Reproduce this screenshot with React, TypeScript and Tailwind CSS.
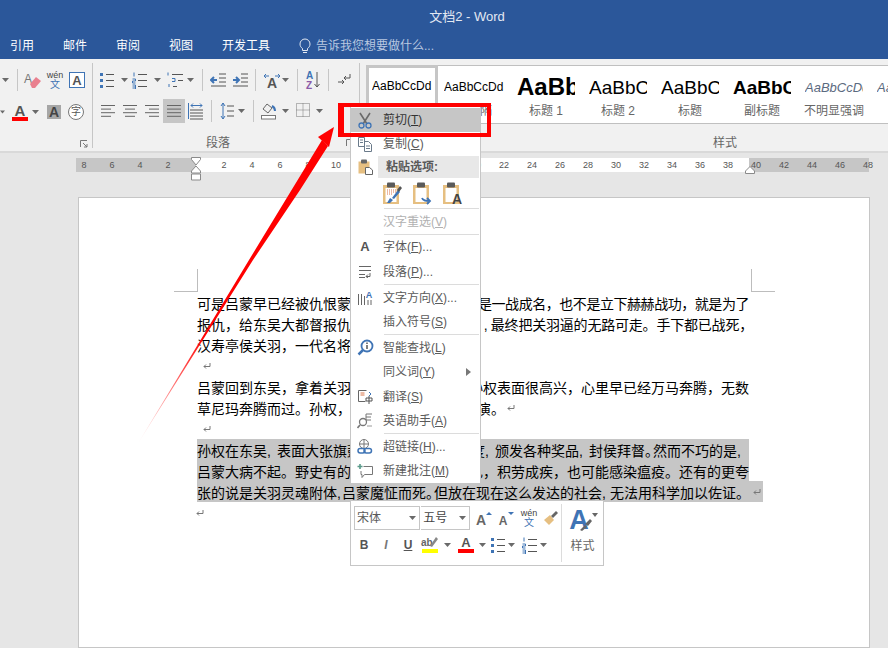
import React from 'react';

const cjk = { fontFamily: '"Liberation Sans", "Noto Sans CJK SC", sans-serif' };

function Caret({ className = '' }: { className?: string }) {
  return (
    <span className={`flex justify-center shrink-0 ${className}`}>
      <svg width="7" height="4" viewBox="0 0 7 4"><path d="M0 0h7L3.500 4z" fill="#6a6a6a" /></svg>
    </span>
  );
}

function Sep({ className = '' }: { className?: string }) {
  return <span className={`w-px h-[22px] bg-[#c6c6c6] shrink-0 ${className}`} />;
}

function Ico({ children, className = '', w = 18, h = 18 }: { children: React.ReactNode; className?: string; w?: number; h?: number }) {
  return (
    <span className={`flex justify-center shrink-0 ${className}`}>
      <svg width={w} height={h} viewBox={`0 0 ${w} ${h}`} fill="none">{children}</svg>
    </span>
  );
}

const bulletsIcon = (
  <>
    <rect x="2" y="2" width="3" height="3" fill="#3f74b5" /><rect x="2" y="8" width="3" height="3" fill="#3f74b5" /><rect x="2" y="14" width="3" height="3" fill="#3f74b5" />
    <path d="M8 3.500h8M8 9.500h8M8 15.500h8" stroke="#555" />
  </>
);
const numbersIcon = (
  <>
    <path d="M3 1.500v4M1.500 8h3v2h-3v2h3M1.500 14h3v4M1.500 16h3M1.500 18h3" stroke="#3f74b5" />
    <path d="M7 3.500h9M7 9.500h9M7 15.500h9" stroke="#555" />
  </>
);
const wenIcon = (
  <>
    <text x="9" y="8" textAnchor="middle" fontSize="9" fill="#444" style={cjk}>wén</text>
    <text x="9" y="18" textAnchor="middle" fontSize="10" fill="#3f74b5" style={cjk}>文</text>
  </>
);

function Aligned({ lines }: { lines: number[][] }) {
  return (
    <Ico w={16} h={14}>
      {lines.map((l, i) => <path key={i} d={`M${l[0]} ${1.500 + i * 3.600}H${l[1]}`} stroke="#666" />)}
    </Ico>
  );
}

function Ribbon() {
  return (
    <div className="h-[94px] bg-[#f1f1f1] border-b-2 border-[#d9d9d9] flex overflow-hidden shrink-0">
      <div className="w-[92px] shrink-0 flex flex-col">
        <div className="h-[32px] mt-[5px] flex items-center">
          <Caret className="w-[10px]" />
          <Sep className="ml-[7px]" />
          <Ico className="ml-[5px]" w={20}>
            <text x="1" y="12" fontSize="12" fill="#777" style={cjk}>A</text>
            <path d="M7 13l6-7 5 4-6 7H9z" fill="#e9808f" />
          </Ico>
          <Ico className="ml-[3px]" w={18} h={20}>{wenIcon}</Ico>
          <span className="ml-[5px] w-[16px] h-[16px] border border-[#3f74b5] bg-white flex items-center justify-center text-[13px] font-bold text-[#555] leading-none shrink-0" style={cjk}>A</span>
        </div>
        <div className="h-[24px] mt-[4px] flex items-center">
          <Caret className="w-[5px]" />
          <span className="ml-[7px] w-[16px] flex flex-col items-center shrink-0">
            <span className="text-[15px] font-bold text-[#555] leading-[13px]" style={cjk}>A</span>
            <span className="w-[16px] h-[4px] bg-[#f00]" />
          </span>
          <Caret className="w-[7px] ml-[4px]" />
          <span className="ml-[8px] w-[14px] h-[14px] bg-[#a6a6a6] flex items-center justify-center text-[14px] font-bold text-[#444] leading-none shrink-0" style={cjk}>A</span>
          <span className="ml-[7px] w-[16px] h-[16px] rounded-full border border-[#777] bg-white flex items-center justify-center text-[10px] text-[#555] leading-none shrink-0" style={cjk}>字</span>
        </div>
        <div className="flex-1 flex justify-end items-start pr-[4px] pt-[16px]">
          <svg width="8" height="8" viewBox="0 0 8 8" fill="none"><path d="M.5 7V.5H7M3 3l4 4M4 7h3V4" stroke="#777" /></svg>
        </div>
      </div>
      <Sep className="h-[85px] mt-[4px]" />

      <div className="w-[266px] shrink-0 flex flex-col">
        <div className="h-[32px] mt-[5px] flex items-center pl-[5px]">
          <Ico>{bulletsIcon}</Ico>
          <Caret className="w-[16px]" />
          <Ico className="-ml-[1px]">{numbersIcon}</Ico>
          <Caret className="w-[16px]" />
          <Ico className="ml-[1px]" w={18}>
            <path d="M2 1.500v3M6 7.500h3v3H6M3 13v3" stroke="#3f74b5" />
            <path d="M6 3.500h11M12 9.500h5M7 15.500h4" stroke="#555" />
          </Ico>
          <Caret className="w-[12px]" />
          <Sep className="ml-[6px]" />
          <Ico className="ml-[7px]" w={17}>
            <path d="M1 9h6M4 6L1 9l3 3" stroke="#3f74b5" strokeWidth="2" />
            <path d="M9 3h7M9 7h7M9 11h7M1 15h15" stroke="#555" />
          </Ico>
          <Ico className="ml-[5px]" w={17}>
            <path d="M1 9h6M4 6l3 3-3 3" stroke="#3f74b5" strokeWidth="2" />
            <path d="M9 3h7M9 7h7M9 11h7M1 15h15" stroke="#555" />
          </Ico>
          <Sep className="ml-[6px]" />
          <Ico className="ml-[7px]" w={18}>
            <path d="M1 5h5M1 5l2-2M1 5l2 2M17 5h-5M17 5l-2-2M17 5l-2 2" stroke="#3f74b5" />
            <text x="9" y="17" textAnchor="middle" fontSize="14" fontWeight="700" fill="#555" style={cjk}>A</text>
          </Ico>
          <Caret className="w-[9px]" />
          <Sep className="ml-[7px]" />
          <Ico className="ml-[7px]" w={16} h={20}>
            <text x="1" y="9" fontSize="10" fontWeight="700" fill="#3f74b5" style={cjk}>A</text>
            <text x="1" y="19" fontSize="10" fontWeight="700" fill="#8a5aa8" style={cjk}>Z</text>
            <path d="M12 2v15M9.500 14l2.500 3 2.500-3" stroke="#555" />
          </Ico>
          <Sep className="ml-[7px]" />
          <Ico className="ml-[7px]" w={16}>
            <path d="M14 3v4H8M10 5L8 7l2 2M2 11h6M6 9l2 2-2 2" stroke="#555" />
          </Ico>
        </div>
        <div className="h-[24px] mt-[4px] flex items-center pl-[4px]">
          <span className="w-[22px] shrink-0"><Aligned lines={[[1, 15], [1, 11], [1, 15], [1, 11]]} /></span>
          <span className="w-[22px] shrink-0"><Aligned lines={[[1, 15], [3, 13], [1, 15], [3, 13]]} /></span>
          <span className="w-[22px] shrink-0"><Aligned lines={[[1, 15], [5, 15], [1, 15], [5, 15]]} /></span>
          <span className="w-[22px] h-[24px] shrink-0 bg-[#c6c6c6] flex items-center justify-center"><Aligned lines={[[1, 15], [1, 15], [1, 15], [1, 15]]} /></span>
          <Ico className="ml-[3px]" w={16}>
            <path d="M.5 1v16" stroke="#3f74b5" /><path d="M3 3.500h11M5 1.500l-2 2 2 2M12 1.500l2 2-2 2" stroke="#3f74b5" />
            <path d="M2 8h13M2 11h13M2 14h13M2 17h13" stroke="#555" />
          </Ico>
          <Sep className="ml-[7px]" />
          <Ico className="ml-[7px]" w={16}>
            <path d="M4 1v16M2 4l2-3 2 3M2 14l2 3 2-3" stroke="#3f74b5" />
            <path d="M8 4h7M8 9h7M8 14h7" stroke="#555" />
          </Ico>
          <Caret className="w-[12px]" />
          <Sep className="ml-[6px]" />
          <Ico className="ml-[6px]" w={18}>
            <path d="M3 7l4-5 5 4-4 5z" stroke="#666" /><path d="M12 4c2 1 3 3 3 5" stroke="#3f74b5" strokeWidth="2" />
            <rect x="1.500" y="13.500" width="14" height="3.500" stroke="#777" fill="#fff" />
          </Ico>
          <Caret className="w-[14px]" />
          <Ico className="ml-[3px]" w={16}>
            <path d="M1.500 1.500h13v13h-13zM1.500 8h13M8 1.500v13" stroke="#777" strokeDasharray="1 1" />
          </Ico>
          <Caret className="w-[16px]" />
        </div>
        <div className="flex-1 flex items-start justify-between pl-[113px] pr-[5px] pt-[12px] text-[12px] text-[#666] leading-[16px]" style={cjk}>
          <span>段落</span>
          <svg width="8" height="8" viewBox="0 0 8 8" fill="none" className="mt-[4px]"><path d="M.5 7V.5H7" stroke="#777" /></svg>
        </div>
      </div>
      <Sep className="h-[85px] mt-[4px]" />

      <div className="flex-1 flex flex-col pl-[6px] min-w-0">
        <div className="h-[60px] mt-[6px] bg-white border-y border-[#c0c0c0] flex">
          <Style sample="AaBbCcDd" label="正文" sampleClass="w-[60px] text-[12px] text-black" selected />
          <Style sample="AaBbCcDd" label="无间隔" sampleClass="w-[60px] text-[12px] text-black" />
          <Style sample="AaBbCc" label="标题 1" sampleClass="w-[58px] text-[24px] font-bold text-black" />
          <Style sample="AaBbCc" label="标题 2" sampleClass="w-[58px] text-[19px] text-black" />
          <Style sample="AaBbCc" label="标题" sampleClass="w-[58px] text-[19px] text-black" />
          <Style sample="AaBbCc" label="副标题" sampleClass="w-[58px] text-[19px] font-bold text-black" />
          <Style sample="AaBbCcDd" label="不明显强调" sampleClass="w-[58px] text-[13px] italic text-[#5a6a80]" />
          <Style sample="AaB" label="" sampleClass="w-[58px] text-[13px] italic text-[#5a6a80]" />
        </div>
        <div className="pl-[347px] mt-[11px] leading-[16px] text-[12px] text-[#666]" style={cjk}>样式</div>
      </div>
    </div>
  );
}

function Style({ sample, label, sampleClass, selected }: { sample: string; label: string; sampleClass: string; selected?: boolean }) {
  return (
    <div className={`w-[72px] shrink-0 flex flex-col items-center border-[3px] ${selected ? 'border-[#c6c6c6] -mt-px -mb-px' : 'border-transparent'}`}>
      <div className={`h-[36px] flex items-center justify-start overflow-hidden whitespace-nowrap leading-none ${sampleClass}`} style={cjk}>{sample}</div>
      <div className="text-[12px] leading-[14px] -mt-[1px] text-[#666] whitespace-nowrap" style={cjk}>{label}</div>
    </div>
  );
}

function Ruler() {
  const left = ['8', '6', '4', '2'];
  const mid = ['2', '4', '6', '8', '10', '12', '14', '16', '18', '20', '22', '24', '26', '28', '30', '32', '34', '36', '38'];
  const right = ['40', '42', '44', '46', '48'];
  const cls = 'w-[28px] shrink-0 text-center';
  return (
    <div className="h-[14px] mt-[5px] ml-[76px] w-[793px] flex text-[9px] leading-[14px] text-[#555] relative shrink-0" style={cjk}>
      <div className="w-[120px] bg-[#c6c6c6] flex">
        <div className="flex -ml-[6px]">{left.map(n => <span key={n} className={cls}>{n}</span>)}</div>
      </div>
      <div className="w-[553px] bg-white flex pl-[14px]">
        {mid.map(n => <span key={n} className={cls}>{n}</span>)}
      </div>
      <div className="w-[120px] bg-[#c6c6c6] flex">
        <div className="flex -ml-[7px]">{right.map(n => <span key={n} className={cls}>{n}</span>)}</div>
      </div>
      <svg className="absolute left-[115px] -top-[1px]" width="10" height="24" viewBox="0 0 10 24">
        <path d="M.5.5h9v2L5 8 .5 2.500zM5 9l4.500 5v2h-9v-2zM.5 17h9v6h-9z" fill="#fff" stroke="#8a8a8a" />
      </svg>
      <svg className="absolute left-[669px] top-[8px]" width="10" height="8" viewBox="0 0 10 8">
        <path d="M5 .5L9.500 5v2.500h-9V5z" fill="#fff" stroke="#8a8a8a" />
      </svg>
    </div>
  );
}

function Line({ left, right, sel, rightClass = '', wide }: { left: React.ReactNode; right?: React.ReactNode; sel?: boolean; rightClass?: string; wide?: boolean }) {
  return (
    <div className={`h-[21px] flex justify-between text-[14px] leading-[24px] whitespace-nowrap ${wide ? 'w-[566px]' : 'w-[552px]'} ${sel ? 'bg-[#c6c6c6]' : ''}`}>
      <span>{left}</span>
      {right && <span className={`flex ${rightClass}`}>{right}</span>}
    </div>
  );
}

function ReturnMark({ className = '' }: { className?: string }) {
  return (
    <span className={`w-[14px] h-[21px] flex items-center justify-center shrink-0 ${className}`}>
      <svg width="8" height="8" viewBox="0 0 8 8" fill="none"><path d="M7 1v3.500H1M3 2.500L1 4.500l2 2" stroke="#777" /></svg>
    </span>
  );
}

function Corner({ className }: { className: string }) {
  return <div className={`w-[24px] h-[23px] border-[#bdbdbd] ${className}`} />;
}

function Cm({ className }: { className: string }) {
  return <span className={`inline-block ${className}`}>,</span>;
}

function Dot() {
  return <span className="inline-block w-[8px]">。</span>;
}

function Page() {
  return (
    <div className="ml-[78px] mt-[25px] w-[792px] flex-1 bg-white border border-[#c6c6c6] flex flex-col pt-[71px] text-black" style={cjk}>
      <div className="flex justify-between pl-[95px] pr-[94px] h-[23px] shrink-0">
        <Corner className="border-r border-b" />
        <Corner className="border-l border-b" />
      </div>
      <div className="pl-[118px]">
        <Line left="可是吕蒙早已经被仇恨蒙" right="是一战成名，也不是立下赫赫战功，就是为了" rightClass="tracking-[-0.45px]" />
        <Line left="报仇，给东吴大都督报仇。" right={<><Cm className="w-[7px]" />最终把关羽逼的无路可走。手下都已战死，</>} rightClass="tracking-[-0.2px] -mr-[4px]" />
        <Line left="汉寿亭侯关羽，一代名将" />
        <div className="h-[21px] pl-[3px]"><ReturnMark /></div>
        <Line left="吕蒙回到东吴，拿着关羽" right="孙权表面很高兴，心里早已经万马奔腾，无数" />
        <div className="h-[21px] w-[552px] flex text-[14px] leading-[24px] whitespace-nowrap">
          <span>草尼玛奔腾而过。孙权，</span>
          <span className="ml-[126px]">演。</span>
          <ReturnMark className="-ml-[1px]" />
        </div>
        <div className="h-[21px] pl-[3px]"><ReturnMark /></div>
        <Line sel left={<>孙权在东吴<Cm className="w-[10px]" />表面大张旗鼓</>} right={<>度<Cm className="w-[10px]" />颁发各种奖品<Cm className="w-[10px]" />封侯拜督<Dot />然而不巧的是<Cm className="w-[10px]" /></>} rightClass="mr-[2px]" />
        <Line sel left="吕蒙大病不起。野史有的" right="扎，积劳成疾，也可能感染瘟疫。还有的更夸" />
        <Line sel wide left={<>张的说是关羽灵魂附体<Cm className="w-[5px]" />吕蒙魔怔而死<Dot />但放在现在这么发达的社会<Cm className="w-[8px]" />无法用科学加以佐证。</>} right={<ReturnMark />} />
        <div className="h-[21px] -ml-[4px]"><ReturnMark /></div>
      </div>
    </div>
  );
}

function MenuIcon({ children }: { children?: React.ReactNode }) {
  return <span className="w-[26px] ml-[1px] flex justify-center shrink-0">{children}</span>;
}

function MenuItem({ label, u, tail = '', icon, disabled, active, arrow, tall }: { label: string; u: string; tail?: string; icon?: React.ReactNode; disabled?: boolean; active?: boolean; arrow?: boolean; tall?: boolean }) {
  return (
    <div className={`flex items-center text-[12px] ${tall ? 'h-[25px]' : 'h-[24px]'} ${active ? 'bg-[#c6c6c6] text-[#333]' : disabled ? 'text-[#b1b1b1]' : 'text-[#5a5a5a]'}`}>
      <MenuIcon>{icon}</MenuIcon>
      <span className="ml-[5px] flex-1 whitespace-nowrap">{label}(<span className="underline">{u}</span>){tail}</span>
      {arrow && <svg className="mr-[9px]" width="5" height="8" viewBox="0 0 5 8"><path d="M0 0l5 4-5 4z" fill="#777" /></svg>}
    </div>
  );
}

function MenuSep() {
  return <div className="h-px bg-[#dcdcdc] ml-[33px] mr-[1px]" />;
}

function Clip({ children }: { children: React.ReactNode }) {
  return (
    <svg width="22" height="24" viewBox="0 0 22 24" fill="none">
      <path d="M1 4h16v19H1z" fill="#e6bf81" />
      <rect x="5" y="1.500" width="8" height="5" rx="1" fill="#5a5a5a" />
      <path d="M3.500 7h11v14h-11z" fill="#fff" />
      {children}
    </svg>
  );
}

function ContextMenu() {
  return (
    <div className="absolute left-[350px] top-[106px] w-[131px] bg-white border border-[#c6c6c6] pt-[1px]" style={cjk}>
      <MenuItem active label="剪切" u="T" icon={
        <svg width="16" height="17" viewBox="0 0 16 17" fill="none">
          <path d="M3 1l7 11M13 1L6 12" stroke="#6a6a6a" strokeWidth="1.600" />
          <circle cx="4.500" cy="13.500" r="2.500" stroke="#3f74b5" strokeWidth="1.300" /><circle cx="11.500" cy="13.500" r="2.500" stroke="#3f74b5" strokeWidth="1.300" />
        </svg>} />
      <MenuItem label="复制" u="C" icon={
        <svg width="16" height="16" viewBox="0 0 16 16" fill="none">
          <path d="M1.500 1.500h6v9h-6zM7.500 5.500h4l3 3v7h-7zM3 4h3M3 6.500h3M9 10h4M9 12.500h4" stroke="#6a7a8a" fill="#fff" />
        </svg>} />
      <div className="h-[22px] flex items-center">
        <MenuIcon>
          <svg width="15" height="16" viewBox="0 0 15 16" fill="none">
            <path d="M.5 2.500h11v12H.5z" fill="#e6bf81" /><rect x="3" y="0.500" width="6" height="4" rx="1" fill="#666" />
            <path d="M7.500 8.500h4l3 2.500v4.500h-7z" fill="#fff" stroke="#666" />
          </svg>
        </MenuIcon>
        <span className="flex-1 h-full bg-[#e8e8e8] text-[12px] font-bold text-[#5a5a5a] pl-[8px] mr-[1px] leading-[22px]">粘贴选项:</span>
      </div>
      <div className="h-[30px] flex items-center pl-[31px] gap-[8px]">
        <Clip>
          <path d="M5 9h9M5 11h9M5 13h6" stroke="#d9764a" strokeDasharray="1 1" />
          <path d="M5 22l3-5 3 2-3 3zM10 17l6-8 2 2-6 7z" fill="#3f74b5" /><path d="M15 9l3-4 2 2-3 4z" fill="#555" />
        </Clip>
        <Clip>
          <path d="M10 17c1 3 4 3 8 3M15 17l3 3-3 3" stroke="#3f74b5" strokeWidth="1.800" />
        </Clip>
        <Clip>
          <text x="15" y="23" textAnchor="middle" fontSize="14" fontWeight="700" fill="#444" style={cjk}>A</text>
        </Clip>
      </div>
      <MenuSep />
      <MenuItem tall disabled label="汉字重选" u="V" />
      <MenuSep />
      <MenuItem label="字体" u="F" tail="..." icon={<span className="text-[13px] font-bold text-[#555]">A</span>} />
      <MenuItem tall label="段落" u="P" tail="..." icon={
        <svg width="14" height="13" viewBox="0 0 14 13" fill="none"><path d="M1 1.500h12M1 5.500h12M1 9.500h6M1 12.500h6M12 8v3.500H8M10 9.500l-2 2 2 1.500" stroke="#666" /></svg>} />
      <MenuSep />
      <MenuItem tall label="文字方向" u="X" tail="..." icon={
        <svg width="16" height="16" viewBox="0 0 16 16" fill="none">
          <path d="M1.500 4v11M4.500 4v11M7.500 6v9" stroke="#666" />
          <text x="12" y="8" textAnchor="middle" fontSize="9" fontWeight="700" fill="#3f74b5" style={cjk}>A</text>
          <path d="M11 10v5M14 10v5" stroke="#666" />
        </svg>} />
      <MenuItem label="插入符号" u="S" />
      <MenuSep />
      <MenuItem tall label="智能查找" u="L" icon={
        <svg width="17" height="17" viewBox="0 0 17 17" fill="none">
          <circle cx="10" cy="7" r="5.500" stroke="#3f74b5" strokeWidth="1.800" fill="#fff" />
          <path d="M6 11l-4.500 4.500" stroke="#3f74b5" strokeWidth="2.500" />
          <path d="M10 6v4" stroke="#555" strokeWidth="1.500" /><path d="M10 3.500v1.500" stroke="#555" strokeWidth="1.500" />
        </svg>} />
      <MenuItem label="同义词" u="Y" arrow />
      <MenuItem tall label="翻译" u="S" icon={
        <svg width="16" height="15" viewBox="0 0 16 15" fill="none">
          <path d="M1.500 1.500h8M1.500 1.500v11h7" stroke="#666" /><path d="M3.500 4h4M3.500 6h4" stroke="#d9764a" />
          <path d="M9 9h6v3H9zM12 7v8" stroke="#555" /><path d="M12 3l2 2-2 2" stroke="#3f74b5" />
        </svg>} />
      <MenuItem label="英语助手" u="A" icon={
        <svg width="17" height="16" viewBox="0 0 17 16" fill="none">
          <circle cx="6" cy="9" r="3.500" stroke="#777" strokeWidth="1.300" /><path d="M3 12l-2.500 3" stroke="#777" strokeWidth="1.600" />
          <path d="M15 1H9v6h5M9 4h5" stroke="#777" /><path d="M10 13h5" stroke="#999" />
        </svg>} />
      <MenuSep />
      <MenuItem tall label="超链接" u="H" tail="..." icon={
        <svg width="16" height="16" viewBox="0 0 16 16" fill="none">
          <circle cx="7" cy="5" r="4.500" stroke="#777" /><path d="M2.500 5h9M7 .5v9" stroke="#777" />
          <rect x="1" y="9.500" width="7" height="4.500" rx="2.200" stroke="#3f74b5" strokeWidth="1.500" fill="#fff" />
          <rect x="7" y="9.500" width="7.500" height="4.500" rx="2.200" stroke="#3f74b5" strokeWidth="1.500" />
        </svg>} />
      <MenuItem label="新建批注" u="M" icon={
        <svg width="16" height="16" viewBox="0 0 16 16" fill="none">
          <path d="M3 1v5M.5 3.500h5" stroke="#5a9a8a" strokeWidth="1.600" />
          <path d="M6.500 3.500h9v8h-8L5 14.500v-3H4V8" stroke="#777" />
        </svg>} />
    </div>
  );
}

function MiniBar() {
  return (
    <div className="absolute left-[350px] top-[500px] w-[254px] h-[66px] bg-white border border-[#c6c6c6] flex" style={cjk}>
      <div className="w-[210px] shrink-0 flex flex-col">
        <div className="flex items-center mt-[5px] ml-[3px]">
          <div className="w-[68px] h-[24px] border border-[#c6c6c6] flex items-center justify-between pl-[2px] pr-[3px] text-[12px] text-[#5a5a5a]">宋体<Caret className="w-[7px]" /></div>
          <div className="w-[50px] h-[24px] border border-[#c6c6c6] border-l-0 ml-[1px] flex items-center justify-between pl-[2px] pr-[3px] text-[12px] text-[#444]">五号<Caret className="w-[7px]" /></div>
          <Ico className="ml-[3px] w-[22px]" w={18} h={18}>
            <text x="6" y="16" textAnchor="middle" fontSize="14" fontWeight="700" fill="#666" style={cjk}>A</text><path d="M11 6l3-3 3 3z" fill="#3f74b5" />
          </Ico>
          <Ico className="w-[22px]" w={18} h={18}>
            <text x="6" y="16" textAnchor="middle" fontSize="12" fontWeight="700" fill="#666" style={cjk}>A</text><path d="M11 3l3 3 3-3z" fill="#3f74b5" />
          </Ico>
          <Ico className="w-[24px]" w={18} h={20}>{wenIcon}</Ico>
          <Ico className="w-[20px]" w={16} h={16}>
            <path d="M1 10l6-5 4 5-5 5z" fill="#e6bf81" /><path d="M8 6l5-5 2 2-5 5z" fill="#666" />
          </Ico>
        </div>
        <div className="flex items-center mt-[6px]">
          <span className="w-[14px] ml-[6px] text-center text-[12px] font-bold text-[#555]">B</span>
          <span className="w-[14px] ml-[8px] text-center text-[12px] font-bold italic text-[#777]">I</span>
          <span className="w-[14px] ml-[8px] text-center text-[12px] font-bold underline text-[#555]">U</span>
          <span className="ml-[6px] w-[18px] flex flex-col items-center relative">
            <span className="text-[10px] leading-[12px] font-bold text-[#666] self-start">ab</span>
            <svg className="absolute right-0 -top-[2px]" width="10" height="12" viewBox="0 0 10 12"><path d="M1 11l6-9 2 2-6 8z" fill="#888" /></svg>
            <span className="w-[16px] h-[4px] bg-[#ffff00]" />
          </span>
          <Caret className="w-[7px] ml-[5px]" />
          <span className="ml-[6px] w-[18px] flex flex-col items-center">
            <span className="text-[13px] leading-[12px] font-bold text-[#555]">A</span>
            <span className="w-[16px] h-[4px] bg-[#f00]" />
          </span>
          <Caret className="w-[7px] ml-[4px]" />
          <Ico className="ml-[3px]">{bulletsIcon}</Ico>
          <Caret className="w-[7px] ml-[1px]" />
          <Ico className="ml-[6px]">{numbersIcon}</Ico>
          <Caret className="w-[7px] ml-[1px]" />
        </div>
      </div>
      <div className="w-px h-[58px] mt-[3px] bg-[#dcdcdc]" />
      <div className="flex-1 flex flex-col items-center pt-[3px]">
        <Ico className="h-[30px]" w={30} h={28}>
          <text x="11" y="25" textAnchor="middle" fontSize="27" fontWeight="700" fill="#3f74b5" style={cjk}>A</text>
          <path d="M12 26l5-5 2 2-5 4zM17 20l5-5 2 2-4 5z" fill="#666" /><path d="M24 9h6l-3 4z" fill="#666" />
        </Ico>
        <span className="mt-[5px] text-[12px] text-[#666] leading-[14px]">样式</span>
      </div>
    </div>
  );
}

export default function App() {
  return (
    <div className="relative w-[888px] h-[648px] overflow-hidden bg-[#e6e6e6] flex flex-col" style={cjk}>
      <div className="h-[33px] bg-[#2b579a] shrink-0 flex items-center justify-center pl-[46px] text-[13px] text-[#e3e9f3]">
        <span>文档2 - Word</span>
      </div>
      <div className="h-[26px] bg-[#2b579a] shrink-0 flex items-center text-[12px] text-white pl-[10px]">
        <span className="w-[53px]">引用</span>
        <span className="w-[53px]">邮件</span>
        <span className="w-[53px]">审阅</span>
        <span className="w-[53px]">视图</span>
        <span className="w-[77px]">开发工具</span>
        <svg width="12" height="16" viewBox="0 0 12 16" fill="none" className="mr-[5px]">
          <path d="M3.500 10.500C2 9.500 1 8 1 6a5 5 0 0 1 10 0c0 2-1 3.500-2.500 4.500v2h-5zM4 14.500h4" stroke="#e3e9f3" />
        </svg>
        <span className="text-[#b9c8e0]">告诉我您想要做什么...</span>
      </div>
      <Ribbon />
      <Ruler />
      <Page />
      <ContextMenu />
      <MiniBar />
      <svg className="absolute left-0 top-0 pointer-events-none" width="888" height="648" viewBox="0 0 888 648">
        <defs>
          <linearGradient id="shaft" gradientUnits="userSpaceOnUse" x1="137" y1="445" x2="205" y2="335">
            <stop offset="0" stopColor="#ff0000" stopOpacity="0" />
            <stop offset="1" stopColor="#ff0000" />
          </linearGradient>
        </defs>
        <path d="M137 445L249 260L322 140L328 146L300 190L253 260z" fill="url(#shaft)" />
        <path d="M334 127L318 137L329 147z" fill="#f00" />
      </svg>
      <div className="absolute left-[338px] top-[103px] w-[153px] h-[34px] border-[4px] border-l-[6px] border-[#f00] pointer-events-none" />
    </div>
  );
}
